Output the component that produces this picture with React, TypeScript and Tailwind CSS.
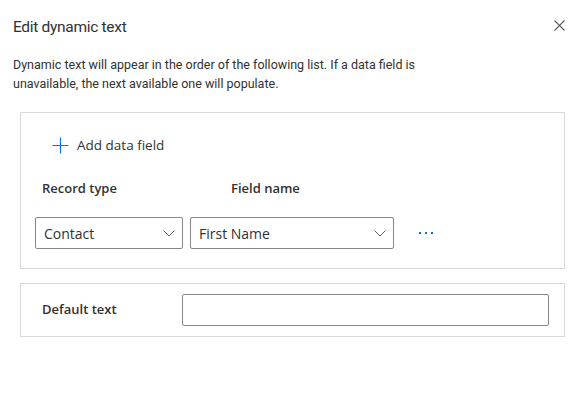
const font = { fontFamily: '"Open Sans", "Noto Sans", sans-serif' };
const roboto = { fontFamily: 'Roboto, "Open Sans", sans-serif' };

function Chevron() {
  return (
    <svg width="12" height="7" viewBox="0 0 12 7" fill="none" stroke="#605e5c" strokeWidth="1">
      <path d="M0.5 0.5L6 6L11.5 0.5" />
    </svg>
  );
}

function Dropdown({ value, width }: { value: string; width: string }) {
  return (
    <div
      className={`flex items-center justify-between h-[32px] border border-[#8a8886] rounded-[2px] pl-[8px] pr-[7px] ${width}`}
    >
      <span className="text-[14px] text-[#323130]">{value}</span>
      <Chevron />
    </div>
  );
}

export default function App() {
  return (
    <div className="w-[585px] h-[396px] bg-white text-[#323130]" style={font}>
      {/* Header */}
      <div className="flex items-start justify-between pl-[13px] pr-[20px] pt-[15px]">
        <h1 className="text-[15.5px] leading-[24px] font-normal tracking-[-0.3px]" style={roboto}>
          Edit dynamic text
        </h1>
        <button className="mt-[5px] text-[#605e5c]">
          <svg width="11" height="11" viewBox="0 0 11 11" fill="none" stroke="currentColor" strokeWidth="1.1">
            <path d="M0.5 0.5L10.5 10.5M10.5 0.5L0.5 10.5" />
          </svg>
        </button>
      </div>

      {/* Description */}
      <p className="pl-[13px] mt-[16px] text-[12.5px] leading-[19px]" style={roboto}>
        Dynamic text will appear in the order of the following list. If a data field is
        <br />
        unavailable, the next available one will populate.
      </p>

      {/* Data fields */}
      <div className="mx-[20px] mt-[19px] h-[157px] border border-[#d9d9d9] pl-[14px]">
        <button className="flex items-center gap-[8px] mt-[22px] ml-[17px] h-[20px]">
          <svg width="17" height="17" viewBox="0 0 17 17" fill="none" stroke="#0078d4" strokeWidth="1.2">
            <path d="M8.5 0.5V16.5M0.5 8.5H16.5" />
          </svg>
          <span className="text-[13.5px] text-[#323130]">Add data field</span>
        </button>

        <div className="flex mt-[24px] text-[13px] font-semibold h-[20px] items-center">
          <span className="ml-[7px] w-[189px]">Record type</span>
          <span>Field name</span>
        </div>

        <div className="flex items-center mt-[18px]">
          <Dropdown value="Contact" width="w-[148px]" />
          <div className="w-[7px]" />
          <Dropdown value="First Name" width="w-[204px]" />
          <div className="flex gap-[4px] ml-[25px]">
            <span className="w-[2px] h-[2px] bg-[#0078d4]" />
            <span className="w-[2px] h-[2px] bg-[#0078d4]" />
            <span className="w-[2px] h-[2px] bg-[#0078d4]" />
          </div>
        </div>
      </div>

      {/* Default text */}
      <div className="mx-[20px] mt-[14px] h-[54px] border border-[#d9d9d9] flex items-center">
        <span className="ml-[21px] w-[140px] text-[13px] font-semibold">Default text</span>
        <input className="w-[367px] h-[32px] border border-[#8a8886] rounded-[2px] outline-none px-[8px]" />
      </div>
    </div>
  );
}
